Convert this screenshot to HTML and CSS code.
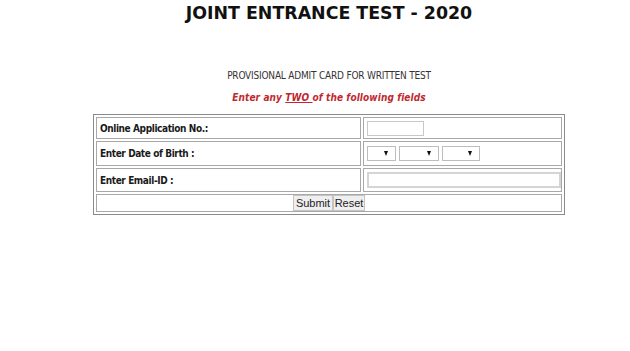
FILE: index.html
```html
<!DOCTYPE html>
<html>
<head>
<meta charset="utf-8">
<title>JOINT ENTRANCE TEST - 2020</title>
<link rel="stylesheet" href="styles.css">
</head>
<body>
<div class="page">
  <h1 class="title">JOINT ENTRANCE TEST - 2020</h1>
  <p class="subtitle">PROVISIONAL ADMIT CARD FOR WRITTEN TEST</p>
  <p class="note">Enter any <u>TWO </u>of the following fields</p>
  <form class="form">
    <table class="grid">
      <colgroup><col class="col-label"><col class="col-field"></colgroup>
      <tr class="row-a">
        <td class="label">Online Application No.:</td>
        <td class="field"><input class="app-no" type="text"></td>
      </tr>
      <tr class="row-b">
        <td class="label">Enter Date of Birth :</td>
        <td class="field">
          <span class="sel sel-d"><select><option></option></select></span><span class="sel sel-m"><select><option></option></select></span><span class="sel sel-y"><select><option></option></select></span>
        </td>
      </tr>
      <tr class="row-c">
        <td class="label">Enter Email-ID :</td>
        <td class="field"><input class="email" type="text"></td>
      </tr>
      <tr class="row-d">
        <td class="actions" colspan="2"><button type="button" class="btn btn-submit">Submit</button><button type="button" class="btn btn-reset">Reset</button></td>
      </tr>
    </table>
  </form>
</div>
</body>
</html>
```

FILE: styles.css
```css
html, body {
  margin: 0;
  padding: 0;
  background: #ffffff;
  overflow: hidden;
}
body {
  font-family: "DejaVu Sans", Verdana, sans-serif;
  color: #222;
}
.page {
  width: 602px;
  margin-left: 28px;
  text-align: center;
}
.title {
  margin: 0;
  padding-top: 3px;
  font-size: 17.4px;
  line-height: 21px;
  font-weight: bold;
  color: #111;
}
.subtitle {
  margin: 45px 0 0;
  font-family: "DejaVu Sans Condensed", "DejaVu Sans", sans-serif;
  font-size: 10px;
  letter-spacing: -0.2px;
  line-height: 13px;
  color: #333;
}
.note {
  margin: 9px 0 0;
  font-family: "DejaVu Sans Condensed", "DejaVu Sans", sans-serif;
  font-size: 10px;
  letter-spacing: 0.1px;
  line-height: 13px;
  font-weight: bold;
  font-style: italic;
  color: #c0282d;
}
.note u {
  text-decoration-thickness: 1px;
}
.form {
  margin: 10px 0 0 65px;
  width: 472px;
}
.grid {
  width: 472px;
  table-layout: fixed;
  border: 1px solid #8a8a8a;
  border-spacing: 2px;
  text-align: left;
}
.col-label { width: 265px; }
.col-field { width: 199px; }
.grid td {
  border: 1px solid #a8a8a8;
  padding: 0 3px;
  font-family: "DejaVu Sans Condensed", "DejaVu Sans", sans-serif;
  font-size: 10px;
  letter-spacing: -0.4px;
  font-weight: bold;
  color: #1a1a1a;
}
.row-a td { height: 20px; }
.row-b td { height: 23px; }
.row-c td { height: 22px; }
.row-d td { height: 14px; }
.field {
  vertical-align: middle;
}
.app-no {
  display: block;
  box-sizing: border-box;
  width: 57px;
  height: 15px;
  margin: 0;
  padding: 0;
  border: 1px solid #c8c8c8;
  background: #fff;
}
.email {
  display: block;
  box-sizing: border-box;
  width: 194px;
  height: 16px;
  margin: 0;
  padding: 0;
  border: 2px solid #d4d4d4;
  background: #fff;
}
.sel {
  position: relative;
  display: inline-block;
  vertical-align: middle;
  margin-right: 3px;
}
.sel select {
  display: block;
  box-sizing: border-box;
  height: 15px;
  margin: 0;
  padding: 0;
  border: 1px solid #bdbdbd;
  background: #fff;
  -webkit-appearance: none;
  appearance: none;
  border-radius: 0;
}
.sel::after {
  content: "";
  position: absolute;
  right: 8px;
  top: 5px;
  border-left: 2px solid transparent;
  border-right: 2px solid transparent;
  border-top: 5px solid #111;
}
.sel-d select { width: 29px; }
.sel-m select { width: 40px; }
.sel-y select { width: 38px; }
.actions {
  text-align: center;
  vertical-align: middle;
}
.grid .actions {
  padding: 0;
}
.btn {
  box-sizing: border-box;
  height: 16px;
  margin: 0;
  padding: 0;
  vertical-align: middle;
  font-family: "Liberation Sans", Arial, sans-serif;
  font-size: 11px;
  line-height: 14px;
  color: #222;
  background: #efefef;
  border: 1px solid #c4c4c4;
  border-radius: 0;
}
.btn-submit { width: 40px; }
.btn-reset { width: 32px; }
```
